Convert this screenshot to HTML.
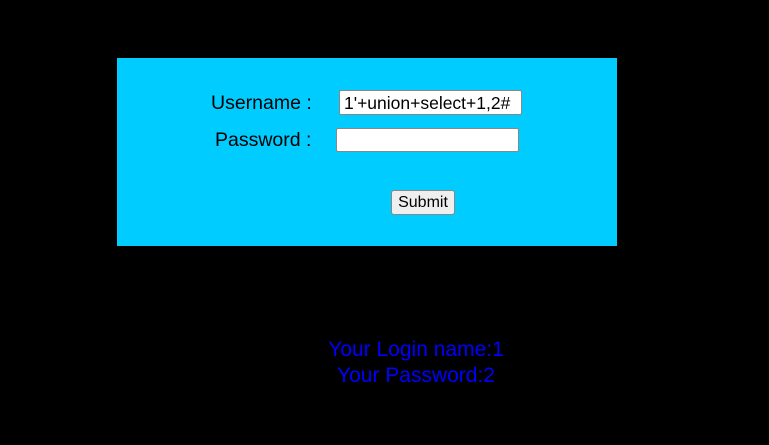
<!DOCTYPE html>
<html><head><meta charset="utf-8"><style>
body{margin:0;width:769px;height:445px;background:#000;position:relative;overflow:hidden;font-family:"Liberation Sans",sans-serif}
.p{position:absolute;left:117px;top:58px;width:500px;height:188px;background:#00CCFF}
.l{position:absolute;font-size:19.5px;color:#000;white-space:nowrap}
.i{position:absolute;background:#fff;border:1px solid #888;border-radius:2px;box-sizing:border-box;font-size:17.5px;padding:2px 0 0 4px;color:#000;white-space:nowrap;overflow:hidden}
.b{position:absolute;left:391px;top:190px;width:64px;height:25px;background:#efefef;border:1px solid #888;border-radius:3px;box-sizing:border-box;font-size:16px;text-align:center;line-height:23px}
.r{position:absolute;left:0;width:832px;text-align:center;color:#0000ff;font-size:21px;white-space:nowrap}
</style></head><body>
<div class="p"></div>
<div class="l" style="left:211px;top:92px">Username :</div>
<div class="l" style="left:215px;top:129px">Password :</div>
<div class="i" style="left:339px;top:90px;width:183px;height:25px">1'+union+select+1,2#</div>
<div class="i" style="left:336px;top:128px;width:183px;height:24px"></div>
<div class="b">Submit</div>
<div class="r" style="top:338px">Your Login name:1</div>
<div class="r" style="top:364px">Your Password:2</div>
</body></html>
